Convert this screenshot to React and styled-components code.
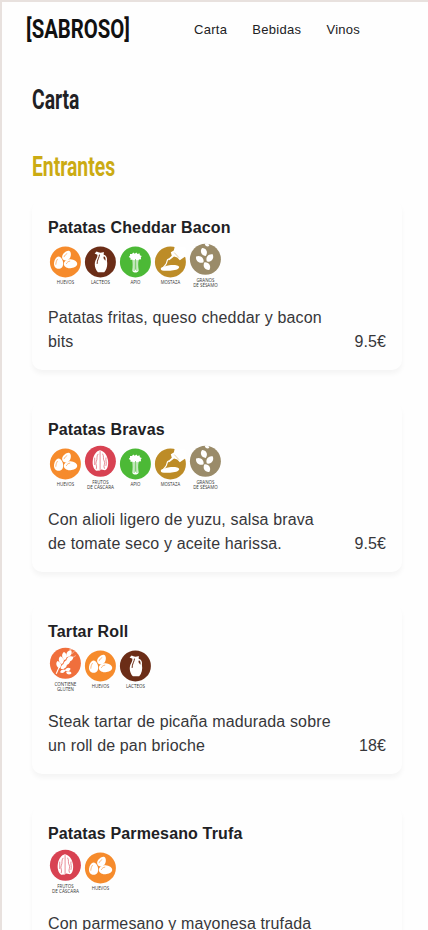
import React from 'react';
import styled, { createGlobalStyle } from 'styled-components';

const dishes = [
    {
        name: 'Patatas Cheddar Bacon',
        description: 'Patatas fritas, queso cheddar y bacon bits',
        price: '9.5€',
        allergens: ['huevos', 'lacteos', 'apio', 'mostaza', 'sesamo'],
    },
    {
        name: 'Patatas Bravas',
        description: 'Con alioli ligero de yuzu, salsa brava de tomate seco y aceite harissa.',
        price: '9.5€',
        allergens: ['huevos', 'frutos', 'apio', 'mostaza', 'sesamo'],
    },
    {
        name: 'Tartar Roll',
        description: 'Steak tartar de picaña madurada sobre un roll de pan brioche',
        price: '18€',
        allergens: ['gluten', 'huevos', 'lacteos'],
    },
    {
        name: 'Patatas Parmesano Trufa',
        description: 'Con parmesano y mayonesa trufada',
        allergens: ['frutos', 'huevos'],
    },
];

const seed = 'M0-4.2C3.2-2.4 3.2 2.4 0 4.2C-3.2 2.4-3.2-2.4 0-4.2Z';

// Every drawing is centered on 0,0 inside a circle of radius 15.5
const allergens = {
    huevos: {
        color: '#f68b2c',
        lines: [['HUEVOS', 17.5]],
        drawing: (
            <g fill="#fff">
                <path d="M-6.8-5.4C-4.2-5.4-2.2-1.4-2.2 1.8C-2.2 4.8-4.2 6.8-6.8 6.8S-11.4 4.8-11.4 1.8C-11.4-1.4-9.4-5.4-6.8-5.4Z" />
                <path d="M4-11C6.2-9.8 5.7-5.4 4.2-3.3C2.6-1-.4-.9-2-2.2C-3.9-3.6-3.6-6.4-1.9-8.3C-.2-10.2 2.2-11.7 4-11Z" />
                <path d="M-1.5 1.5C-1.2-1.1 2-2.7 5.2-2.6C8.6-2.5 12-.4 11.8 2.2C11.5 5 7.6 6.6 4.2 6.3C.8 6-1.8 4.4-1.5 1.5Z" />
                <path d="M-9.6 2.8C-9.5.4-8.9-1.4-7.8-2.8M-1.4-4.8C-.9-6.4.4-7.7 1.8-8.3M.9 2C1.5.3 3-.6 4.8-.8" fill="none" stroke="#f68b2c" strokeWidth=".6" />
            </g>
        ),
    },
    lacteos: {
        color: '#6b2d17',
        lines: [['LACTEOS', 19]],
        drawing: (
            <g>
                <path d="M-3.8-10.3C-1.6-8.9 1-9 3.4-10L3.3-7.2C6-6.6 7.1-4 6.5-1.2C7.4 3 6.4 7.6 3.8 10.4H-2.5C-5.4 7.4-6.4 2.6-5-1.2C-4-3.4-2.8-5.2-3-7.2L-5.8-8.4Z" fill="#fff" />
                <path d="M3.5-5.6C5.3-4.8 5.4-2.7 4.9-1.2L3-4Z" fill="#6b2d17" />
                <path d="M-.9-7.3C-1-4.4-3.4-2-3.3 2" fill="none" stroke="#6b2d17" strokeWidth="1" />
            </g>
        ),
    },
    apio: {
        color: '#4cb936',
        lines: [['APIO', 10]],
        drawing: (
            <g>
                <path d="M-2.9-2.2L-5-2.2L-4.9-4L-6.6-4.8L-5.4-6.4L-5.4-8L-3.4-7.9L-2.2-9.4L-.6-8.2L.9-9.4L2.2-8L4.1-8.6L4.5-6.7L6.3-6L5.4-4.4L5.7-2.7L3.6-2.4L3-1.5C2.6 1.5 2.6 4.5 3.2 8.8C2.4 11.1-1.8 11.2-3 9C-2.5 4.6-2.6 1.4-2.9-2.2Z" fill="#fff" />
                <path d="M-1.4-1.8L-1.3 9M.1-2.8V7.8M1.6-1.8L1.5 9" fill="none" stroke="#4cb936" strokeWidth=".7" />
            </g>
        ),
    },
    mostaza: {
        color: '#bd8c27',
        lines: [['MOSTAZA', 19.5]],
        drawing: (
            <g fill="#fff">
                <path d="M.4-9.6L3.4-11.5L4.5-16L16-14.2L15.6-5.9L9.4-1.6L6.8-4.3L3.6-5.4L-1.1-1.6L-1.8-3.2L1.4-6.2Z" />
                <path d="M3.8-9.4L8.6-4.2" fill="none" stroke="#bd8c27" strokeWidth=".4" />
                <path d="M-1.6-3C-4.6-1.6-2.6.4-4.8 2.8L-7 5.4" fill="none" stroke="#fff" strokeWidth="1.2" />
                <path d="M-9.6 7.1C-9.6 4.8-6.3 5-3.5 3.9C-.4 2.6 8.7 2.7 8.8 5.2C8.9 7.5 3.8 8.8-.2 8.8C-4.3 8.8-9.6 9.4-9.6 7.1Z" />
            </g>
        ),
    },
    sesamo: {
        color: '#9a8b69',
        lines: [['GRANOS', 18], ['DE SÉSAMO', 24.5]],
        drawing: (
            <g fill="#fff">
                <path d={seed} transform="translate(-1.5 -7.2) rotate(-25) scale(1.2 1.02)" />
                <path d={seed} transform="translate(4.4 -1.3) rotate(38) scale(1.25 1.1)" />
                <path d={seed} transform="translate(-5.6 .2) rotate(-52) scale(1.25 1.12)" />
                <path d={seed} transform="translate(1.5 7) rotate(-32) scale(1.25 1.08)" />
                <path d={seed} transform="translate(1.6 -14.4) rotate(-65) scale(.6)" />
            </g>
        ),
    },
    frutos: {
        color: '#d84252',
        lines: [['FRUTOS', 16.5], ['DE CÁSCARA', 27]],
        drawing: (
            <g>
                <path d="M-.5-10.9C3.9-10.3 7-5.5 7.6-.7C8.2 3.8 7.2 8.3 4.6 9.1L.8 8.2L-.5 9.3L-4.3 9.5C-7.2 7.6-8.3 2.8-7.5-1.7C-6.7-6.1-4-10.3-.5-10.9Z" fill="#fff" />
                <path d="M-.3-10V8.7M-2.2-7.3C-4.4-4.7-2.6-2.6-4.1.2S-2.8 4.5-4.2 8M2.1-7.5C4-4.6 2.1-2.7 3.8-.2S2.4 4.1 4.1 7.5M-5.7-3.5V3.8M5.6-3.7C4.9-.9 6.7.7 5.5 4.7" fill="none" stroke="#d84252" strokeWidth=".6" />
            </g>
        ),
    },
    gluten: {
        color: '#f06f3c',
        lines: [['CONTIENE', 22], ['GLUTEN', 17]],
        drawing: (
            <g>
                <path d="M-9.2 10.5C-6.6 5-4.8-2 3-8.6" fill="none" stroke="#fff" strokeWidth="1.1" />
                <g fill="#fff">
                    <path d={seed} transform="translate(3.6 -9.6) rotate(32) scale(.95)" />
                    <path d={seed} transform="translate(-1 -7.2) rotate(-8) scale(.95)" />
                    <path d={seed} transform="translate(-4.2 -3.2) rotate(-14) scale(.95)" />
                    <path d={seed} transform="translate(-6.8 1.4) rotate(-18) scale(.9)" />
                    <path d={seed} transform="translate(4.4 -4.4) rotate(58) scale(.95)" />
                    <path d={seed} transform="translate(1.4 -.6) rotate(56) scale(.95)" />
                    <path d={seed} transform="translate(-1.6 3.2) rotate(52) scale(.9)" />
                    <path d={seed} transform="translate(-2.6 8) rotate(68) scale(.7)" />
                    <path d={seed} transform="translate(2.4 6.4) rotate(72) scale(.7)" />
                    <path d={seed} transform="translate(3.4 9.6) rotate(98) scale(.65)" />
                </g>
                <path d="M3.4-13L6.4-14M6-9L9-12M7-5.6L10.4-7.6" fill="none" stroke="#fff" strokeWidth=".5" />
            </g>
        ),
    },
};

const Allergen = ({ type }) => {
    const { color, lines, drawing } = allergens[type];
    const twoLines = lines.length > 1;

    return (
        <AllergenSvg viewBox="0 0 35 50" role="img" aria-label={type}>
            <g transform={`translate(17.4 ${twoLines ? 19.2 : 21.9})`}>
                <circle r="15.5" fill={color} />
                {drawing}
            </g>
            {lines.map(([text, width], index) => (
                <AllergenLabel
                    key={text}
                    x="17.4"
                    y={(twoLines ? 41.5 : 43.7) + index * 5.3}
                    textLength={width}
                    lengthAdjust="spacingAndGlyphs"
                >
                    {text}
                </AllergenLabel>
            ))}
        </AllergenSvg>
    );
};

const Dish = ({ dish }) => {
    return (
        <Card>
            <DishName>{dish.name}</DishName>
            <AllergenRow>
                {dish.allergens.map((type) => (
                    <Allergen key={type} type={type} />
                ))}
            </AllergenRow>
            <DishFooter>
                <Description>{dish.description}</Description>
                {dish.price && <Price>{dish.price}</Price>}
            </DishFooter>
        </Card>
    );
};

const App = () => {
    return (
        <>
            <GlobalStyle />
            <Page>
                <Header>
                    <Logo viewBox="0 0 106 36">
                        <LogoText x="1" y="26.3" textLength="104" lengthAdjust="spacingAndGlyphs">[SABROSO]</LogoText>
                    </Logo>
                    <Nav>
                        <NavLink href="#carta">Carta</NavLink>
                        <NavLink href="#bebidas">Bebidas</NavLink>
                        <NavLink href="#vinos">Vinos</NavLink>
                    </Nav>
                </Header>
                <Main>
                    <Title>Carta</Title>
                    <SectionTitle>Entrantes</SectionTitle>
                    <DishList>
                        {dishes.map((dish) => (
                            <Dish key={dish.name} dish={dish} />
                        ))}
                    </DishList>
                </Main>
            </Page>
        </>
    );
};

const GlobalStyle = createGlobalStyle`
    * {
        box-sizing: border-box;
    }

    body {
        margin: 0;
        background-color: #fefefe;
        color: #212124;
        font-family: 'Liberation Sans', Arial, sans-serif;
    }
`;

const Page = styled.div`
    height: 930px;
    overflow: hidden;
    border-top: 2px solid #e8e1de;
    border-left: 2px solid #e8e1de;
`;

const Header = styled.header`
    display: flex;
    align-items: center;
    height: 56px;
    padding-left: 23px;
`;

const Logo = styled.svg`
    width: 106px;
    height: 36px;
`;

const LogoText = styled.text`
    font-family: Roboto, sans-serif;
    font-size: 25px;
    font-weight: 700;
    fill: #111;
`;

const Nav = styled.nav`
    display: flex;
    gap: 25px;
    margin-left: 63px;
`;

const NavLink = styled.a`
    font-size: 13px;
    line-height: 20px;
    letter-spacing: 0.3px;
    color: #212124;
    text-decoration: none;
`;

const Main = styled.main`
    display: flex;
    flex-direction: column;
    align-items: flex-start;
    padding: 23px 24px 0 30px;
`;

const Title = styled.h1`
    margin: 0;
    font-family: Roboto, sans-serif;
    font-size: 28px;
    font-weight: 700;
    line-height: 38px;
    transform: scaleX(0.69);
    transform-origin: left;
`;

const SectionTitle = styled(Title).attrs({ as: 'h2' })`
    margin-top: 29px;
    color: #cbab13;
`;

const DishList = styled.div`
    display: flex;
    flex-direction: column;
    gap: 32px;
    width: 370px;
    margin-top: 14px;
`;

const Card = styled.article`
    height: 170px;
    padding: 16px;
    border-radius: 10px;
    background-color: #fefefe;
    box-shadow: 0 4px 5px rgba(0, 0, 0, 0.04);
`;

const DishName = styled.h3`
    margin: 0;
    font-size: 16px;
    font-weight: 700;
    line-height: 24px;
    letter-spacing: 0.14px;
`;

const AllergenRow = styled.div`
    display: flex;
    height: 50px;
`;

const AllergenSvg = styled.svg`
    width: 35px;
    height: 50px;
`;

const AllergenLabel = styled.text`
    font-family: 'Open Sans', sans-serif;
    font-size: 4.8px;
    font-weight: 500;
    text-anchor: middle;
    fill: #333;
`;

const DishFooter = styled.div`
    display: flex;
    align-items: flex-end;
    justify-content: space-between;
    margin-top: 16px;
    font-size: 16px;
    line-height: 24px;
    letter-spacing: 0.14px;
    color: #37373a;
`;

const Description = styled.p`
    width: 286px;
    margin: 0;
`;

const Price = styled.span`
    letter-spacing: 0.1px;
`;

export default App;
